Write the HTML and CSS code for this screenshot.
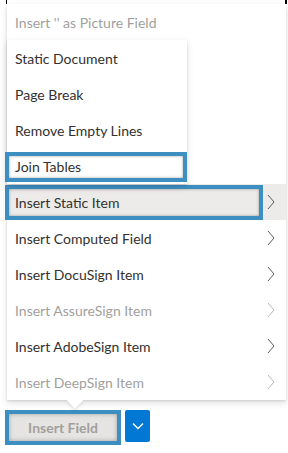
FILE: index.html
```html
<!DOCTYPE html>
<html lang="en">
<head>
    <meta charset="UTF-8">
    <meta name="viewport" content="width=device-width, initial-scale=1.0">
    <title>Insert Field</title>
    <link rel="stylesheet" href="styles.css">
</head>
<body>
    <div class="page">
        <div class="frame-top"></div>
        <div class="menu">
            <div class="item disabled">Insert '' as Picture Field</div>
            <div class="covered"></div>
            <div class="item has-sub active">
                <span>Insert Static Item</span>
                <svg class="chev" viewBox="0 0 8 16"><polyline points="1,1 7,8 1,15"/></svg>
            </div>
            <div class="item has-sub">
                <span>Insert Computed Field</span>
                <svg class="chev" viewBox="0 0 8 16"><polyline points="1,1 7,8 1,15"/></svg>
            </div>
            <div class="item has-sub">
                <span>Insert DocuSign Item</span>
                <svg class="chev" viewBox="0 0 8 16"><polyline points="1,1 7,8 1,15"/></svg>
            </div>
            <div class="item has-sub disabled">
                <span>Insert AssureSign Item</span>
                <svg class="chev" viewBox="0 0 8 16"><polyline points="1,1 7,8 1,15"/></svg>
            </div>
            <div class="item has-sub">
                <span>Insert AdobeSign Item</span>
                <svg class="chev" viewBox="0 0 8 16"><polyline points="1,1 7,8 1,15"/></svg>
            </div>
            <div class="item has-sub disabled">
                <span>Insert DeepSign Item</span>
                <svg class="chev" viewBox="0 0 8 16"><polyline points="1,1 7,8 1,15"/></svg>
            </div>

            <div class="submenu">
                <div class="item">Static Document</div>
                <div class="item">Page Break</div>
                <div class="item">Remove Empty Lines</div>
                <div class="item marked">Join Tables</div>
            </div>
            <div class="beak"></div>
        </div>

        <div class="actions">
            <button class="btn-insert">Insert Field</button>
            <button class="btn-drop">
                <svg viewBox="0 0 12 8"><polyline points="1,1.5 6,6.5 11,1.5"/></svg>
            </button>
        </div>
    </div>
</body>
</html>
```

FILE: styles.css
```css
body {
    margin: 0;
    background-color: #fff;
    font-family: "Segoe UI", Lato, "Noto Sans", sans-serif;
    font-size: 14px;
    color: #323130;
}
.page {
    padding: 0 2px 0 7px;
}
.frame-top {
    height: 4px;
    border-left: 1px solid #000;
    border-right: 2px solid #000;
    margin-left: -1px;
    margin-right: -1px;
}
.menu {
    position: relative;
    width: 279px;
    background-color: #fff;
    box-shadow: 0 3px 7px rgba(0, 0, 0, 0.13), 0 0.6px 1.8px rgba(0, 0, 0, 0.11);
}
.item {
    position: relative;
    height: 36px;
    display: flex;
    align-items: center;
    padding: 0 8px;
    white-space: nowrap;
}
.item.disabled {
    color: #a19f9d;
}
.has-sub {
    justify-content: space-between;
    padding-right: 11px;
}
.chev {
    width: 8px;
    height: 16px;
    fill: none;
    stroke: #4a4847;
    stroke-width: 0.9;
}
.disabled .chev {
    stroke: #b3b0ad;
}
.covered {
    height: 144px;
}
.active {
    background-color: #edebe9;
}
.active::after {
    content: "";
    position: absolute;
    left: -2px;
    top: 1px;
    right: 23px;
    bottom: 0;
    border: 4px solid #3d8fc2;
    box-shadow: inset 0 0 3px rgba(0, 0, 0, 0.35);
}
.submenu {
    position: absolute;
    top: 36px;
    left: 0;
    width: 180px;
    background-color: #fff;
    box-shadow: 0 3px 7px rgba(0, 0, 0, 0.13), 0 0.6px 1.8px rgba(0, 0, 0, 0.11);
}
.marked::after {
    content: "";
    position: absolute;
    left: -2px;
    top: 4px;
    right: 0;
    bottom: 2px;
    border: 4px solid #3d8fc2;
    box-shadow: inset 0 0 3px rgba(0, 0, 0, 0.35);
}
.beak {
    position: absolute;
    left: 62px;
    bottom: -6px;
    width: 12px;
    height: 12px;
    background-color: #fff;
    transform: rotate(45deg);
    box-shadow: 2px 2px 3px rgba(0, 0, 0, 0.08);
}
.actions {
    display: flex;
    align-items: flex-start;
    gap: 4px;
    margin-top: 10px;
    margin-left: -2px;
}
.btn-insert {
    width: 116px;
    height: 35px;
    border: 4px solid #3d8fc2;
    background-color: #e6e4e2;
    box-shadow: inset 0 0 4px rgba(0, 0, 0, 0.3);
    color: #a19f9d;
    font-family: inherit;
    font-size: 14px;
    font-weight: 700;
    padding: 0;
}
.btn-drop {
    width: 25px;
    height: 32px;
    border: none;
    border-radius: 2px;
    background-color: #0078d4;
    display: flex;
    align-items: center;
    justify-content: center;
    padding: 0;
}
.btn-drop svg {
    width: 12px;
    height: 8px;
    fill: none;
    stroke: #fff;
    stroke-width: 1.3;
}
```
